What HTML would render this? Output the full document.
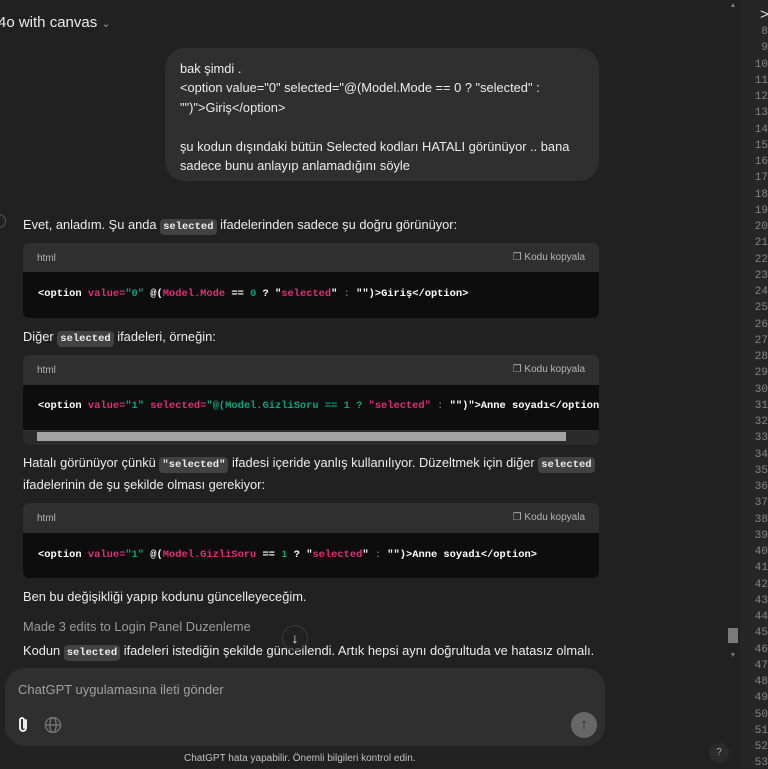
<!DOCTYPE html>
<html><head><meta charset="utf-8"><style>
*{margin:0;padding:0;box-sizing:border-box}
body{width:768px;height:768px;background:#212121;font-family:"Liberation Sans",sans-serif;color:#ececec;position:relative;overflow:hidden;font-size:13px}
.a{position:absolute;white-space:nowrap}
.t{font-size:12.85px;line-height:16px}
.ic{background:#424242;border-radius:4px;font-family:"Liberation Mono",monospace;font-size:10.5px;padding:2px 3px;color:#ececec;font-weight:bold}
.cb{position:absolute;left:23px;width:576px;border-radius:6px;overflow:hidden;background:#2f2f2f}
.ch{height:29px;position:relative;font-size:10px;color:#b4b4b4}
.ch .l{position:absolute;left:14px;top:10px}
.ch .r{position:absolute;right:14px;top:9px}
.cc{background:#0d0d0d;position:relative;font-family:"Liberation Mono",monospace;font-size:10.4px;font-weight:bold;color:#fff}
.cc div{position:absolute;left:15px;white-space:nowrap}
.p{color:#df3079}.g{color:#00a67d}.m{color:#6b6b6b}
.ln{position:absolute;left:737px;width:31px;text-align:right;font-family:"Liberation Mono",monospace;font-size:11px;color:#858585}
</style></head><body>
<div class="a" style="left:-2px;top:14px;font-size:15px;color:#ececec">4o with canvas <span style="color:#9b9b9b;font-size:11px">&#8964;</span></div>

<div class="a" style="left:165px;top:48px;width:434px;height:133px;background:#2f2f2f;border-radius:20px"></div>
<div class="a" style="left:180px;top:59px;line-height:19.4px;font-size:12.85px">bak şimdi .<br>&lt;option value="0" selected="@(Model.Mode == 0 ? "selected" :<br>"")"&gt;Giriş&lt;/option&gt;<br><br>şu kodun dışındaki bütün Selected kodları HATALI görünüyor .. bana<br>sadece bunu anlayıp anlamadığını söyle</div>

<div class="a" style="left:-8px;top:214px;width:14px;height:14px;border:1px solid #555;border-radius:50%"></div>
<div class="a t" style="left:23px;top:217px">Evet, anladım. Şu anda <span class="ic">selected</span> ifadelerinden sadece şu doğru görünüyor:</div>

<div class="cb" style="top:243px;height:75px">
<div class="ch"><span class="l">html</span><span class="r">&#10064; Kodu kopyala</span></div>
<div class="cc" style="height:46px"><div style="top:16px">&lt;option <span class="p">value=</span><span class="g">"0"</span> @(<span class="p">Model.Mode</span> == <span class="g">0</span> ? "<span class="p">selected</span>" <span class="m">:</span> "")&gt;Giriş&lt;/option&gt;</div></div>
</div>

<div class="a t" style="left:23px;top:329px">Diğer <span class="ic">selected</span> ifadeleri, örneğin:</div>

<div class="cb" style="top:355px;height:90px">
<div class="ch" style="height:30px"><span class="l">html</span><span class="r">&#10064; Kodu kopyala</span></div>
<div class="cc" style="height:60px;background:#0d0d0d"><div style="top:15px">&lt;option <span class="p">value=</span><span class="g">"1"</span> <span class="p">selected=</span><span class="g">"@(Model.GizliSoru == 1 ? </span><span class="p">"selected"</span> <span class="m">:</span> "")"&gt;Anne soyadı&lt;/option&gt;</div>
<div style="left:0;top:45px;width:576px;height:15px;background:#2b2b2b"></div>
<div style="left:14px;top:47px;width:529px;height:9px;background:#a3a3a3"></div>
</div></div>

<div class="a t" style="left:23px;top:455px">Hatalı görünüyor çünkü <span class="ic">"selected"</span> ifadesi içeride yanlış kullanılıyor. Düzeltmek için diğer <span class="ic">selected</span></div>
<div class="a t" style="left:23px;top:477px">ifadelerinin de şu şekilde olması gerekiyor:</div>

<div class="cb" style="top:503px;height:75px">
<div class="ch" style="height:30px"><span class="l">html</span><span class="r">&#10064; Kodu kopyala</span></div>
<div class="cc" style="height:45px"><div style="top:16px">&lt;option <span class="p">value=</span><span class="g">"1"</span> @(<span class="p">Model.GizliSoru</span> == <span class="g">1</span> ? "<span class="p">selected</span>" <span class="m">:</span> "")&gt;Anne soyadı&lt;/option&gt;</div></div>
</div>

<div class="a t" style="left:23px;top:589px">Ben bu değişikliği yapıp kodunu güncelleyeceğim.</div>
<div class="a t" style="left:23px;top:619px;color:#9b9b9b">Made 3 edits to Login Panel Duzenleme</div>
<div class="a t" style="left:23px;top:643px">Kodun <span class="ic">selected</span> ifadeleri istediğin şekilde güncellendi. Artık hepsi aynı doğrultuda ve hatasız olmalı.</div>
<div class="a" style="left:282px;top:625px;width:26px;height:26px;border-radius:50%;background:rgba(33,33,33,.6);border:1px solid #3a3a3a;text-align:center;line-height:24px;font-size:14px">&#8595;</div>

<div class="a" style="left:5px;top:668px;width:600px;height:78px;background:#2f2f2f;border-radius:20px"></div>
<div class="a" style="left:18px;top:682px;color:#a0a0a0;font-size:13px">ChatGPT uygulamasına ileti gönder</div>
<svg class="a" style="left:16px;top:716px" width="16" height="18" viewBox="0 0 16 18"><path d="M10 4v8a3 3 0 0 1-6 0V4a2 2 0 0 1 4 0v8" fill="none" stroke="#fff" stroke-width="1.8" stroke-linecap="round"/></svg>
<svg class="a" style="left:44px;top:716px" width="18" height="18" viewBox="0 0 18 18" fill="none" stroke="#777" stroke-width="1.3"><circle cx="9" cy="9" r="7.5"/><ellipse cx="9" cy="9" rx="3.2" ry="7.5"/><path d="M1.5 9h15"/></svg>
<div class="a" style="left:571px;top:712px;width:26px;height:26px;border-radius:50%;background:#676767;color:#2f2f2f;text-align:center;line-height:26px;font-size:15px;font-weight:bold">&#8593;</div>
<div class="a" style="left:184px;top:753px;font-size:10px;color:#c0c0c0">ChatGPT hata yapabilir. Önemli bilgileri kontrol edin.</div>

<div class="a" style="left:727px;top:2px;width:12px;color:#777;font-size:7px;text-align:center">&#9650;</div>
<div class="a" style="left:728px;top:628px;width:10px;height:15px;background:#7a7a7a"></div>
<div class="a" style="left:727px;top:652px;width:12px;color:#777;font-size:7px;text-align:center">&#9660;</div>
<div class="a" style="left:709px;top:743px;width:20px;height:20px;border-radius:50%;background:#2b2b2b;color:#aaa;font-size:10px;text-align:center;line-height:20px">?</div>

<div class="a" style="left:740px;top:0;width:28px;height:768px;background:#262626"></div>
<div class="a" style="left:760px;top:6px;font-size:15px;color:#ddd">&gt;</div>
<div id="lns"></div>
<script>
var h='';for(var i=8;i<=53;i++){h+='<div class="ln" style="top:'+(26+(i-8)*16.25)+'px">'+i+'</div>';}
document.getElementById('lns').innerHTML=h;
</script>
</body></html>
